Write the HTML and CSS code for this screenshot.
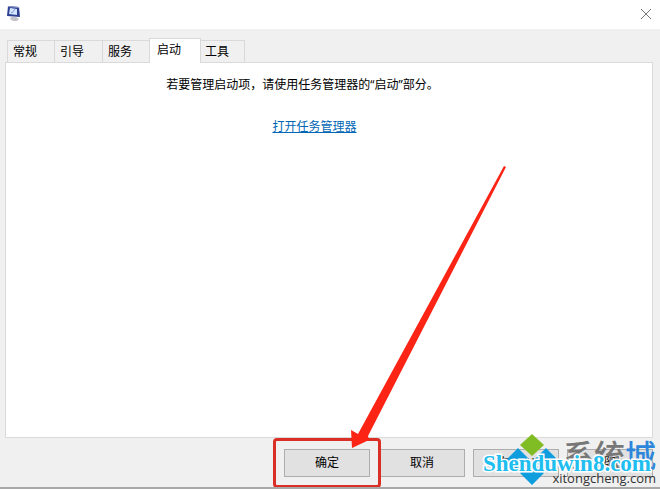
FILE: index.html
```html
<!DOCTYPE html>
<html lang="zh-CN">
<head>
    <meta charset="UTF-8">
    <meta name="viewport" content="width=device-width, initial-scale=1.0">
    <title>系统配置</title>
    <link rel="stylesheet" href="styles.css">
</head>
<body>
    <div class="dialog">
        <header class="titlebar">
            <svg class="app-icon" width="16" height="16" viewBox="0 0 16 16">
                <path d="M5 11l5 0 3 2-2 2H7l-3-2z" fill="#c4c4c8"/>
                <path d="M2 0l11 1 1 10-13-1z" fill="#2c3f92"/>
                <path d="M2 0l11 1v1L2 1z" fill="#8d9bd0"/>
                <path d="M4 2l7 1 0 6-8-1z" fill="#d4e4fa"/>
                <path d="M5 6l1 1 3-4" fill="none" stroke="#7f9fe0"/>
            </svg>
            <button class="close" type="button" aria-label="关闭">
                <svg width="12" height="12" viewBox="0 0 12 12">
                    <path d="M1 1l10 10M11 1L1 11" stroke="#777" fill="none"/>
                </svg>
            </button>
        </header>

        <main class="content">
            <div class="tabs" role="tablist">
                <button class="tab" type="button" role="tab">常规</button>
                <button class="tab" type="button" role="tab">引导</button>
                <button class="tab" type="button" role="tab">服务</button>
                <button class="tab active" type="button" role="tab" aria-selected="true">启动</button>
                <button class="tab" type="button" role="tab">工具</button>
            </div>
            <section class="panel" role="tabpanel">
                <p>若要管理启动项，请使用任务管理器的“启动”部分。</p>
                <a href="#">打开任务管理器</a>
            </section>
        </main>

        <footer class="buttons">
            <div class="marked">
                <button class="btn" type="button">确定</button>
                <svg class="arrow" width="156" height="284" viewBox="0 0 156 284">
                    <path d="M154 1L156 2L18 271L19 275L2 283L1 265L8 269Z" fill="#fb2415"/>
                </svg>
            </div>
            <button class="btn" type="button">取消</button>
            <button class="btn" type="button">应用(A)</button>
            <button class="btn" type="button">帮助</button>
        </footer>

        <div class="watermark">
            <svg class="logo" width="58" height="52" viewBox="0 0 58 52">
                <path d="M29 0l12 11-12 11L17 11z" fill="#80bd25"/>
                <path d="M15 14l12 12-12 12L3 26zM43 14l12 12-12 12-12-12zM29 27l12 12-12 12-12-12z" fill="#109ddd"/>
            </svg>
            <span class="site-name">系统<b>城</b></span>
            <span class="site-url">xitongcheng.com</span>
            <span class="stamp">Shenduwin8.com</span>
        </div>
    </div>
</body>
</html>
```
FILE: styles.css
```css
* {
    box-sizing: border-box;
}
body {
    margin: 0;
    background-color: #f0f0f0;
    font-family: "Open Sans", "Noto Sans CJK SC", sans-serif;
    font-size: 12px;
    line-height: 18px;
    color: #000;
}
button {
    font: inherit;
    color: inherit;
    padding: 0;
}
.dialog {
    position: relative;
    display: flex;
    flex-direction: column;
    min-height: 100vh;
    border-bottom: 2px solid #a8a8a8;
    overflow: hidden;
}
.titlebar {
    display: flex;
    justify-content: space-between;
    align-items: center;
    height: 29px;
    padding: 0 8px 2px 6px;
    background-color: #fff;
}
.app-icon {
    display: block;
}
.close {
    display: flex;
    padding: 0;
    border: none;
    background: none;
}

/* Tabs */
.content {
    display: flex;
    flex-direction: column;
    flex: 1;
    padding: 9px 7px 0 5px;
}
.tabs {
    display: flex;
    align-items: flex-end;
    padding-left: 2px;
}
.tab {
    width: 48px;
    height: 22px;
    padding-left: 5px;
    border: 1px solid #d9d9d9;
    border-bottom: none;
    background-color: #f0f0f0;
    text-align: left;
}
.tab + .tab {
    border-left: none;
}
.tab:last-child {
    width: 44px;
    padding-left: 4px;
}
.tab.active {
    width: 52px;
    height: 25px;
    margin: 0 0 -1px -2px;
    padding: 0 0 3px 7px;
    border-left: 1px solid #d9d9d9;
    background-color: #fff;
    z-index: 1;
}
.panel {
    display: flex;
    flex-direction: column;
    align-items: center;
    flex: 1;
    gap: 24px;
    padding: 13px 53px 12px 0;
    border: 1px solid #dadada;
    background-color: #fff;
}
.panel p {
    margin: 0;
}
.panel a {
    margin-right: -24px;
    color: #0066b4;
}

.buttons {
    display: flex;
    justify-content: flex-end;
    align-items: center;
    gap: 8px;
    margin-bottom: -1px;
    padding-right: 7px;
}
.btn {
    width: 86px;
    height: 28px;
    border: 1px solid #adadad;
    background-color: #e1e1e1;
}
.marked {
    position: relative;
    padding: 8px;
    margin-right: -10px;
    border: 3px solid #d92f26;
    border-radius: 4px;
    z-index: 1;
}
.marked .btn {
    display: block;
}
.arrow {
    position: absolute;
    right: -128px;
    bottom: 36px;
    pointer-events: none;
}

/* Watermark */
.watermark {
    position: absolute;
    right: 4px;
    bottom: 0;
    width: 172px;
    height: 54px;
    pointer-events: none;
}
.logo {
    position: absolute;
    left: 19px;
    top: 1px;
}
.site-name {
    position: absolute;
    right: 0;
    top: 7px;
    font-size: 31px;
    line-height: 31px;
    font-weight: 500;
    color: #777;
}
.site-name b {
    font-weight: 500;
    color: #2b86dc;
}
.site-url {
    position: absolute;
    right: 0;
    bottom: 0;
    font-family: "Open Sans", sans-serif;
    font-size: 13px;
    line-height: 18px;
    color: #333;
}
.stamp {
    position: absolute;
    right: 5px;
    top: 17px;
    font-family: "Liberation Serif", serif;
    font-size: 23px;
    line-height: 28px;
    font-weight: bold;
    color: #20bdf0;
    -webkit-text-stroke: 3px #fff;
    paint-order: stroke fill;
}
```
